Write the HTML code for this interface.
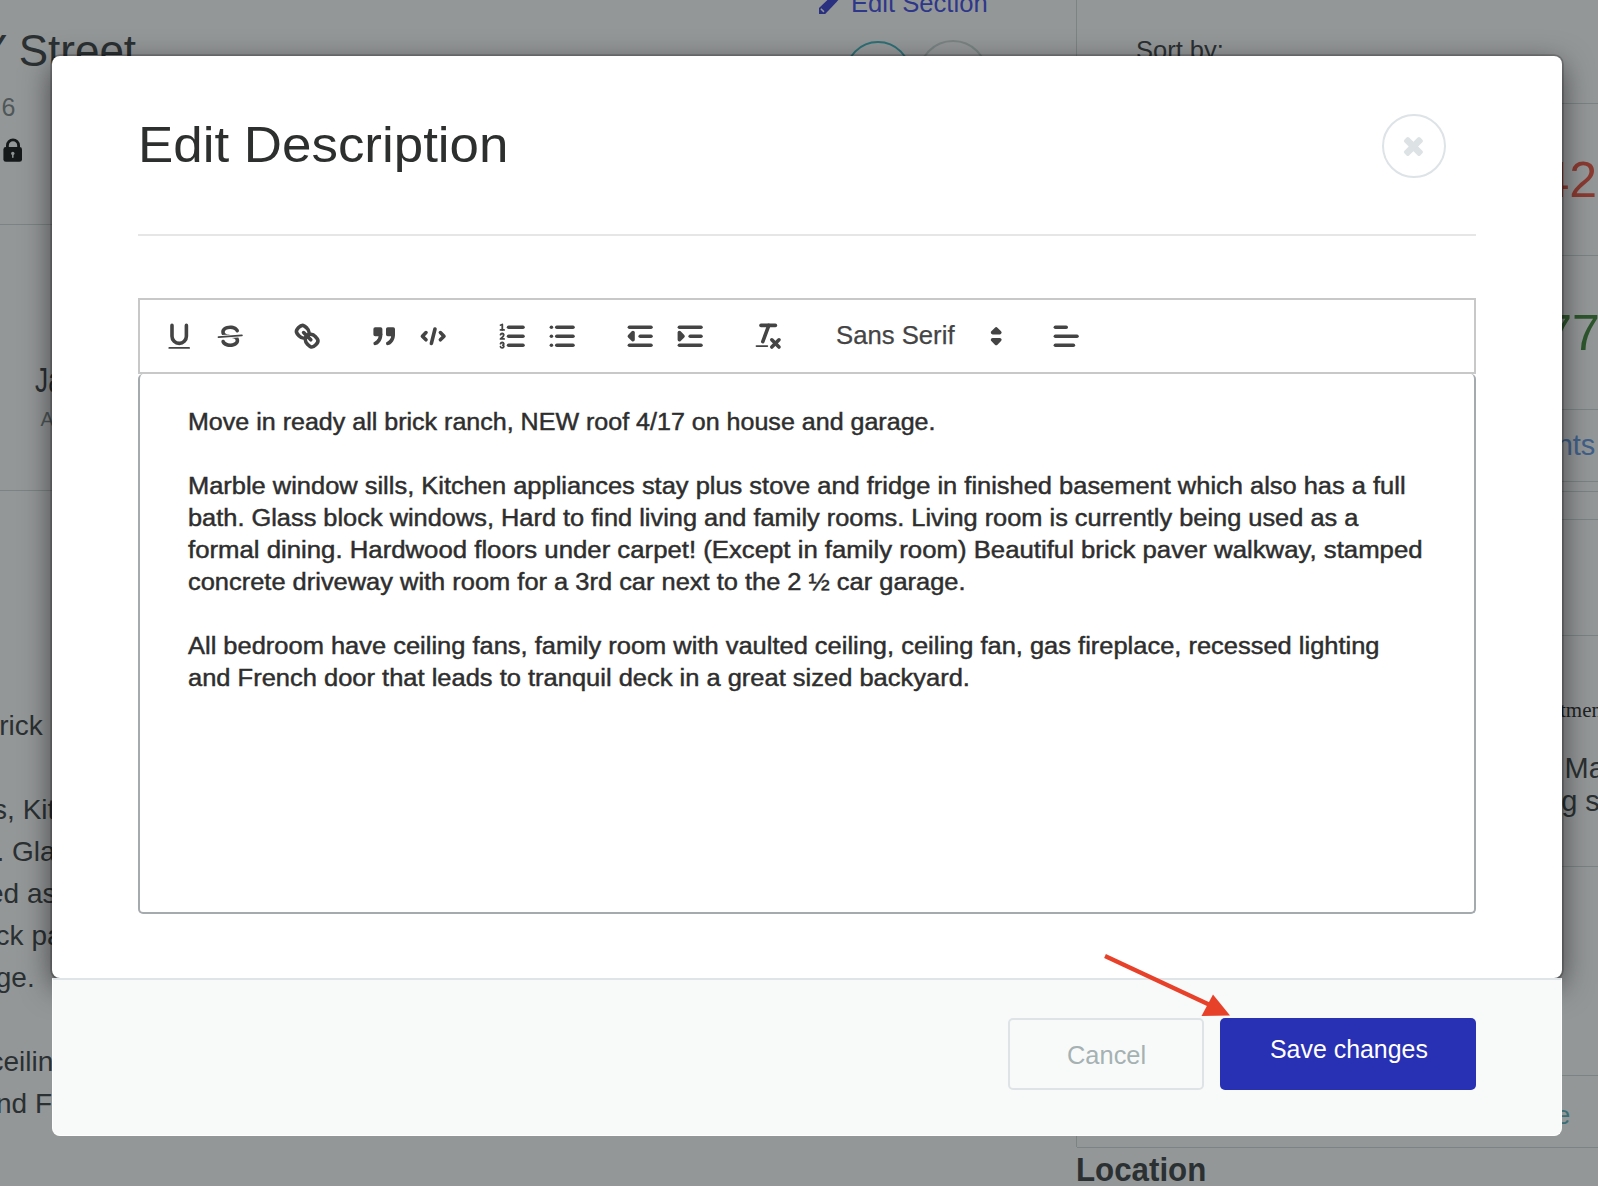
<!DOCTYPE html>
<html><head><meta charset="utf-8">
<style>
html,body{margin:0;padding:0;}
body{width:1598px;height:1186px;overflow:hidden;position:relative;background:#949798;font-family:"Liberation Sans",sans-serif;}
.a{position:absolute;white-space:nowrap;}
.ln{transform-origin:0 0;}
.bgt{color:#2b3032;}
.hl{position:absolute;height:1px;background:#7c8384;}
.vl{position:absolute;width:1px;background:#7c8384;}
#modal{position:absolute;left:52px;top:56px;width:1510px;height:922px;background:#fff;border-radius:8px;box-shadow:0 9px 30px rgba(0,0,0,.58),0 0 0 1.8px rgba(0,0,0,.2);}
#footer{position:absolute;left:52px;top:978px;width:1510px;height:158px;box-sizing:border-box;background:#f8fafa;border-top:2px solid #dfe4e6;border-left:1.5px solid #fff;border-right:1.5px solid #fff;border-bottom:1.5px solid #fff;border-radius:0 0 8px 8px;}
.qi .st{fill:none;stroke:#444;stroke-width:2;stroke-linecap:round;stroke-linejoin:round;}
.qi .th{stroke-width:1;}
.qi .fl{fill:#444;}
.qi rect.fl.st,.qi path.fl.st,.qi polyline.fl.st{fill:#444;}
</style></head>
<body>
<!-- background page -->
<div class="a bgt" style="left:-22.1px;top:28.8px;font-size:44px;line-height:44px;">Y Street</div>
<div class="a" style="left:1.5px;top:94.8px;font-size:25px;line-height:25px;color:#4f5759;">6</div>
<svg class="a" style="left:0;top:130px" width="30" height="40" viewBox="0 0 30 40"><path d="M7.4 17V15.5a5.6 5.6 0 0 1 11.2 0V17" fill="none" stroke="#15191a" stroke-width="2.8"/><rect x="3.4" y="17" width="18.6" height="14.8" rx="2.4" fill="#15191a"/><circle cx="12.8" cy="23.4" r="1.7" fill="#8f9494"/><rect x="12.05" y="23.4" width="1.5" height="4.4" fill="#8f9494"/></svg>
<div class="hl" style="left:0;top:224px;width:60px;"></div>
<div class="a bgt" style="left:35px;top:362px;font-size:35px;line-height:35px;transform:scaleX(0.75);transform-origin:0 0;">Ja</div>
<div class="a" style="left:40.5px;top:408.5px;font-size:20px;line-height:20px;color:#4f5759;">Al</div>
<div class="hl" style="left:0;top:490px;width:60px;"></div>
<div class="a bgt" style="left:-16.4px;top:711.9px;font-size:28px;line-height:28px;">brick ranch,</div>
<div class="a bgt" style="left:-39.6px;top:795.9px;font-size:28px;line-height:28px;">sills, Kitchen</div>
<div class="a bgt" style="left:-58.1px;top:837.9px;font-size:28px;line-height:28px;">bath. Glass</div>
<div class="a bgt" style="left:-41.6px;top:879.9px;font-size:28px;line-height:28px;">used as a</div>
<div class="a bgt" style="left:-35.5px;top:921.9px;font-size:28px;line-height:28px;">brick paver</div>
<div class="a bgt" style="left:-60.3px;top:963.9px;font-size:28px;line-height:28px;">garage.</div>
<div class="a bgt" style="left:-10.6px;top:1047.9px;font-size:28px;line-height:28px;">ceiling fan</div>
<div class="a bgt" style="left:-19.6px;top:1089.9px;font-size:28px;line-height:28px;">and French</div>

<svg class="a" style="left:810px;top:-5px" width="32" height="22" viewBox="810 -5 32 22"><polygon points="819,13.9 819,8 829.5,-2 840,-2 836.6,2 825.2,13.9" fill="#2a3080"/><path d="M821.3,9.2l2.2,2.2" stroke="#8f9494" stroke-width="1.6" stroke-linecap="round"/></svg>
<div class="a" style="left:851px;top:-9.8px;font-size:26px;line-height:26px;color:#2f378a;transform:scaleX(0.985);transform-origin:0 0;">Edit Section</div>
<div class="a" style="left:845px;top:41px;width:66px;height:66px;box-sizing:border-box;border:2.5px solid #2c7077;border-radius:50%;"></div>
<div class="a" style="left:918px;top:40px;width:70px;height:70px;box-sizing:border-box;border:2px solid #7a8383;border-radius:50%;"></div>
<div class="vl" style="left:1076px;top:0;height:60px;"></div>
<div class="a bgt" style="left:1136px;top:36.5px;font-size:26px;line-height:26px;transform:scaleX(0.98);transform-origin:0 0;">Sort by:</div>
<div class="hl" style="left:1077px;top:103px;width:530px;"></div>
<div class="a" style="left:1541.5px;top:155.2px;font-size:50px;line-height:50px;color:#8a3a31;">42</div>
<div class="hl" style="left:1077px;top:255px;width:530px;"></div>
<div class="a" style="left:1544.3px;top:307.7px;font-size:50px;line-height:50px;color:#2d562d;">77</div>
<div class="hl" style="left:1077px;top:409px;width:530px;"></div>
<div class="a" style="left:1516.4px;top:431.2px;font-size:29px;line-height:29px;color:#41608a;">ments</div>
<div class="hl" style="left:1077px;top:481px;width:530px;"></div>
<div class="hl" style="left:1077px;top:491px;width:530px;"></div>
<div class="hl" style="left:1077px;top:519px;width:530px;"></div>
<div class="hl" style="left:1077px;top:635px;width:530px;"></div>
<div class="a" style="left:1560px;top:700.2px;font-family:'Liberation Serif',serif;font-size:21px;line-height:21px;color:#1e2223;">tment</div>
<div class="a bgt" style="left:1540.4px;top:753.5px;font-size:29px;line-height:29px;">d Mar</div>
<div class="a bgt" style="left:1538.6px;top:786.5px;font-size:29px;line-height:29px;">ing sp</div>
<div class="hl" style="left:1077px;top:866px;width:530px;"></div>
<div class="hl" style="left:1077px;top:1075px;width:530px;"></div>
<div class="a" style="left:1511px;top:1102px;font-size:26px;line-height:26px;color:#3a6f76;">More</div>
<div class="vl" style="left:1076px;top:1075px;height:72px;"></div>
<div class="hl" style="left:1077px;top:1147px;width:530px;"></div>
<div class="a bgt" style="left:1076px;top:1151.7px;font-size:34px;line-height:34px;font-weight:bold;transform:scaleX(0.92);transform-origin:0 0;">Location</div>

<div id="modal"></div>
<div id="footer"></div>
<div class="a" id="title" style="left:138px;top:119.7px;font-size:50px;line-height:50px;color:#2d2f2f;transform-origin:0 0;transform:scaleX(1.058)">Edit Description</div>
<div class="a" style="left:1382px;top:114px;width:64px;height:64px;box-sizing:border-box;border:2px solid #dde3e6;border-radius:50%;"></div>
<svg class="a" style="left:1398px;top:131px" width="31" height="31" viewBox="1398 131 31 31"><g transform="translate(1413.4,146.5)"><rect x="-11.2" y="-3.3" width="22.4" height="6.6" rx="1.8" fill="#dde2e5" transform="rotate(45)"/><rect x="-11.2" y="-3.3" width="22.4" height="6.6" rx="1.8" fill="#dde2e5" transform="rotate(-45)"/></g></svg>
<div class="a" style="left:138px;top:234px;width:1338px;height:2px;background:#e6e6e6;"></div>
<div class="a" style="left:138px;top:298px;width:1338px;height:76px;box-sizing:border-box;border:2px solid #c8c8c8;"></div>
<div class="a" style="left:138px;top:374px;width:1338px;height:540px;box-sizing:border-box;border:2px solid #a4aaae;border-top:0;border-radius:5px;"></div>
<div id="tb">
<svg class="a qi" style="left:163.2px;top:319.6px" width="32.4" height="32.4" viewBox="0 0 18 18"><path class="st" d="M5,3V9a4.012,4.012,0,0,0,4,4H9a4.012,4.012,0,0,0,4-4V3"/><rect class="fl" height="1" rx="0.5" ry="0.5" width="12" x="3" y="15"/></svg>
<svg class="a qi" style="left:213.6px;top:319.6px" width="32.4" height="32.4" viewBox="0 0 18 18"><line class="st th" x1="15.5" x2="2.5" y1="8.5" y2="9.5"/><path class="fl" d="M9.007,8C6.542,7.791,6,7.519,6,6.5,6,5.792,7.283,5,9,5c1.571,0,2.765.679,2.969,1.309a1,1,0,0,0,1.9-.617C13.356,4.106,11.354,3,9,3,6.2,3,4,4.538,4,6.5a3.2,3.2,0,0,0,.5,1.843Z"/><path class="fl" d="M8.984,10C11.457,10.208,12,10.479,12,11.5c0,0.708-1.283,1.5-3,1.5-1.571,0-2.765-.679-2.969-1.309a1,1,0,1,0-1.9.617C4.644,13.894,6.646,15,9,15c2.8,0,5-1.538,5-3.5a3.2,3.2,0,0,0-.5-1.843Z"/></svg>
<svg class="a qi" style="left:291px;top:319.6px" width="32.4" height="32.4" viewBox="0 0 18 18"><line class="st" x1="7" x2="11" y1="7" y2="11"/><path class="st" d="M8.9,4.577a3.476,3.476,0,0,1,.36,4.679A3.476,3.476,0,0,1,4.577,8.9C3.185,7.5,2.035,6.4,4.217,4.217S7.5,3.185,8.9,4.577Z"/><path class="st" d="M13.423,9.1a3.476,3.476,0,0,0-4.679-.36,3.476,3.476,0,0,0,.36,4.679c1.392,1.392,2.5,2.542,4.679.36S14.815,10.5,13.423,9.1Z"/></svg>
<svg class="a qi" style="left:368.4px;top:319.6px" width="32.4" height="32.4" viewBox="0 0 18 18"><rect class="fl st" height="3" width="3" x="4" y="5"/><rect class="fl st" height="3" width="3" x="11" y="5"/><path class="fl st" d="M7,8c0,4.031-3,5-3,5"/><path class="fl st" d="M14,8c0,4.031-3,5-3,5"/></svg>
<svg class="a qi" style="left:417.3px;top:319.6px" width="32.4" height="32.4" viewBox="0 0 18 18"><polyline class="st" points="5 7 3 9 5 11"/><polyline class="st" points="13 7 15 9 13 11"/><line class="st" x1="10" x2="8" y1="5" y2="13"/></svg>
<svg class="a qi" style="left:496.2px;top:319.6px" width="32.4" height="32.4" viewBox="0 0 18 18"><line class="st" x1="7" x2="15" y1="4" y2="4"/><line class="st" x1="7" x2="15" y1="9" y2="9"/><line class="st" x1="7" x2="15" y1="14" y2="14"/><line class="st th" x1="2.5" x2="4.5" y1="5.5" y2="5.5"/><path class="fl" d="M3.5,6A0.5,0.5,0,0,1,3,5.5V3.085l-0.276.138A0.5,0.5,0,0,1,2.053,3c-0.124-.247-0.023-0.324.224-0.447l1-.5A0.5,0.5,0,0,1,4,2.5v3A0.5,0.5,0,0,1,3.5,6Z"/><path class="st th" d="M4.5,10.5h-2c0-.234,1.85-1.076,1.85-2.234A0.959,0.959,0,0,0,2.5,8.156"/><path class="st th" d="M2.5,14.846a0.959,0.959,0,0,0,1.85-.109A0.7,0.7,0,0,0,3.75,14a0.688,0.688,0,0,0,.6-0.736,0.959,0.959,0,0,0-1.85-.109"/></svg>
<svg class="a qi" style="left:545.6px;top:319.6px" width="32.4" height="32.4" viewBox="0 0 18 18"><line class="st" x1="6" x2="15" y1="4" y2="4"/><line class="st" x1="6" x2="15" y1="9" y2="9"/><line class="st" x1="6" x2="15" y1="14" y2="14"/><line class="st" x1="3" x2="3" y1="4" y2="4"/><line class="st" x1="3" x2="3" y1="9" y2="9"/><line class="st" x1="3" x2="3" y1="14" y2="14"/></svg>
<svg class="a qi" style="left:624px;top:319.6px" width="32.4" height="32.4" viewBox="0 0 18 18"><line class="st" x1="3" x2="15" y1="14" y2="14"/><line class="st" x1="3" x2="15" y1="4" y2="4"/><line class="st" x1="9" x2="15" y1="9" y2="9"/><polyline class="st" points="5 7 5 11 3 9 5 7"/></svg>
<svg class="a qi" style="left:674.4px;top:319.6px" width="32.4" height="32.4" viewBox="0 0 18 18"><line class="st" x1="3" x2="15" y1="14" y2="14"/><line class="st" x1="3" x2="15" y1="4" y2="4"/><line class="st" x1="9" x2="15" y1="9" y2="9"/><polyline class="fl st" points="3 7 3 11 5 9 3 7"/></svg>
<svg class="a qi" style="left:751.8px;top:319.6px" width="32.4" height="32.4" viewBox="0 0 18 18"><line class="st" x1="5" x2="13" y1="3" y2="3"/><line class="st" x1="6" x2="9.35" y1="12" y2="3"/><line class="st" x1="11" x2="15" y1="11" y2="15"/><line class="st" x1="15" x2="11" y1="11" y2="15"/><rect class="fl" height="1" rx="0.5" ry="0.5" width="7" x="2" y="14"/></svg>
<div class="a" style="left:836px;top:313.8px;font-size:25.2px;line-height:43.2px;color:#444;-webkit-text-stroke:0.25px #444;transform:scaleX(1.02);transform-origin:0 0;">Sans Serif</div>
<svg class="a qi" style="left:979.8px;top:319.6px" width="32.4" height="32.4" viewBox="0 0 18 18"><polygon class="st" points="7 11 9 13 11 11 7 11"/><polygon class="st" points="7 7 9 5 11 7 7 7"/></svg>
<svg class="a qi" style="left:1049.8px;top:319.6px" width="32.4" height="32.4" viewBox="0 0 18 18"><line class="st" x1="3" x2="15" y1="9" y2="9"/><line class="st" x1="3" x2="13" y1="14" y2="14"/><line class="st" x1="3" x2="9" y1="4" y2="4"/></svg>
</div>
<div id="ed" class="a" style="left:188px;top:0;font-size:23px;line-height:23px;color:#2e2e2e;-webkit-text-stroke:0.45px #2e2e2e;">
<div class="a ln" style="top:411.2px;transform:scaleX(1.0887)">Move in ready all brick ranch, NEW roof 4/17 on house and garage.</div>
<div class="a ln" style="top:475.2px;transform:scaleX(1.1061)">Marble window sills, Kitchen appliances stay plus stove and fridge in finished basement which also has a full</div>
<div class="a ln" style="top:507.2px;transform:scaleX(1.1030)">bath. Glass block windows, Hard to find living and family rooms. Living room is currently being used as a</div>
<div class="a ln" style="top:539.2px;transform:scaleX(1.1195)">formal dining. Hardwood floors under carpet! (Except in family room) Beautiful brick paver walkway, stamped</div>
<div class="a ln" style="top:571.2px;transform:scaleX(1.1058)">concrete driveway with room for a 3rd car next to the 2 ½ car garage.</div>
<div class="a ln" style="top:635.2px;transform:scaleX(1.1069)">All bedroom have ceiling fans, family room with vaulted ceiling, ceiling fan, gas fireplace, recessed lighting</div>
<div class="a ln" style="top:667.2px;transform:scaleX(1.1079)">and French door that leads to tranquil deck in a great sized backyard.</div>
</div>
<div class="a" style="left:1008px;top:1018px;width:196px;height:72px;box-sizing:border-box;border:2px solid #dde3e6;border-radius:5px;"></div>
<div class="a" id="cancel" style="left:1066.6px;top:1042px;font-size:26px;line-height:26px;color:#a6b1b2;transform-origin:0 0;transform:scaleX(0.978)">Cancel</div>
<div class="a" style="left:1220px;top:1018px;width:256px;height:72px;background:#2830b4;border-radius:5px;"></div>
<div class="a" id="save" style="left:1269.5px;top:1036px;font-size:26px;line-height:26px;color:#fff;transform-origin:0 0;transform:scaleX(0.958)">Save changes</div>
<svg class="a" style="left:0;top:0" width="1598" height="1186"><line x1="1105" y1="956" x2="1210" y2="1005" stroke="#e8412a" stroke-width="4.2"/><polygon points="1213,994.5 1201.5,1016 1230,1015.6" fill="#e8412a"/></svg>

</body></html>
